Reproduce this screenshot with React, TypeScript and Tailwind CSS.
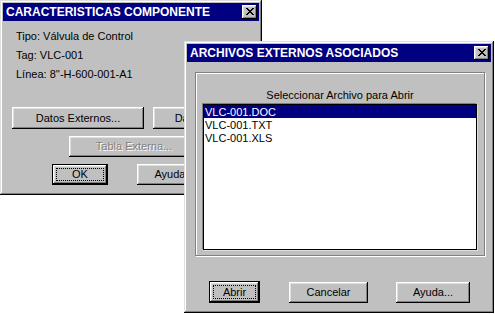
import React from 'react';

// Win95-style bevels
const WIN =
  'shadow-[inset_-1px_-1px_0_#000,inset_1px_1px_0_#dfdfdf,inset_-2px_-2px_0_#808080,inset_2px_2px_0_#fff]';
const BTN =
  'shadow-[inset_-1px_-1px_0_#000,inset_1px_1px_0_#fff,inset_-2px_-2px_0_#808080,inset_2px_2px_0_#dfdfdf]';

const CloseBtn = () => (
  <div className={`flex h-[14px] w-[15px] items-center justify-center bg-[#c0c0c0] ${BTN}`}>
    <svg width="8" height="7" viewBox="0 0 8 7" shapeRendering="crispEdges" className="mb-[1px]">
      <g fill="#000">
        <rect x="0" y="0" width="2" height="1" />
        <rect x="6" y="0" width="2" height="1" />
        <rect x="1" y="1" width="2" height="1" />
        <rect x="5" y="1" width="2" height="1" />
        <rect x="2" y="2" width="4" height="1" />
        <rect x="3" y="3" width="2" height="1" />
        <rect x="2" y="4" width="4" height="1" />
        <rect x="1" y="5" width="2" height="1" />
        <rect x="5" y="5" width="2" height="1" />
        <rect x="0" y="6" width="2" height="1" />
        <rect x="6" y="6" width="2" height="1" />
      </g>
    </svg>
  </div>
);

const TitleBar = ({ title }: { title: string }) => (
  <div className="flex h-[18px] items-center justify-between bg-[#000080] pl-[3px] pr-[2px]">
    <span className="text-[12px] font-bold leading-none text-white">{title}</span>
    <CloseBtn />
  </div>
);

const Button = ({
  label,
  className = '',
  isDefault = false,
  disabled = false,
}: {
  label: string;
  className?: string;
  isDefault?: boolean;
  disabled?: boolean;
}) => (
  <div
    className={`relative flex shrink-0 items-center justify-center bg-[#c0c0c0] text-[11px] ${BTN} ${
      isDefault ? 'border border-black' : ''
    } ${className}`}
  >
    {isDefault && <div className="absolute inset-[3px] border border-dotted border-black" />}
    <span
      className={
        disabled ? 'whitespace-nowrap text-[#808080] [text-shadow:1px_1px_0_#fff]' : 'whitespace-nowrap text-black'
      }
    >
      {label}
    </span>
  </div>
);

export default function App() {
  const files = ['VLC-001.DOC', 'VLC-001.TXT', 'VLC-001.XLS'];

  return (
    <div className="relative h-[314px] w-[495px] overflow-hidden bg-white font-['Liberation_Sans',Arial,sans-serif] text-black">
      {/* Caracteristicas componente */}
      <div className={`absolute left-0 top-0 h-[195px] w-[262px] overflow-hidden bg-[#c0c0c0] p-[3px] ${WIN}`}>
        <TitleBar title="CARACTERISTICAS COMPONENTE" />
        <div className="pl-[13px] pt-[6px] text-[11px] leading-[19px]">
          <div>Tipo: Válvula de Control</div>
          <div>Tag: VLC-001</div>
          <div>Línea: 8''-H-600-001-A1</div>
        </div>
        <div className="ml-[9px] mt-[23px] flex gap-[9px]">
          <Button label="Datos Externos..." className="h-[22px] w-[132px]" />
          <Button label="Datos Internos..." className="h-[22px] w-[124px]" />
        </div>
        <div className="ml-[66px] mt-[7px] flex">
          <Button label="Tabla Externa..." disabled className="h-[21px] w-[130px]" />
        </div>
        <div className="ml-[49px] mt-[7px] flex gap-[29px]">
          <Button label="OK" isDefault className="h-[21px] w-[56px]" />
          <Button label="Ayuda..." className="h-[21px] w-[75px]" />
        </div>
      </div>

      {/* Archivos externos asociados */}
      <div className={`absolute left-[184px] top-[41px] h-[272px] w-[310px] bg-[#c0c0c0] p-[3px] ${WIN}`}>
        <TitleBar title="ARCHIVOS EXTERNOS ASOCIADOS" />
        <div className="ml-[8px] mt-[10px] h-[184px] w-[290px] border border-[#808080] pt-[16px] shadow-[inset_1px_1px_0_#fff,1px_1px_0_#fff]">
          <div className="text-center text-[11px] leading-[13px]">Seleccionar Archivo para Abrir</div>
          <div className="ml-[7px] mt-[2px] h-[146px] w-[274px] border border-black bg-white shadow-[-1px_-1px_0_#808080,1px_1px_0_#dfdfdf]">
            {files.map((f, i) => (
              <div
                key={f}
                className={`flex h-[13px] items-center pl-[1px] text-[11px] leading-[12px] ${
                  i === 0 ? 'bg-[#000080] text-white' : 'text-black'
                }`}
              >
                {f}
              </div>
            ))}
          </div>
        </div>
        <div className="ml-[22px] mt-[25px] flex items-center">
          <Button label="Abrir" isDefault className="h-[22px] w-[51px]" />
          <Button label="Cancelar" className="ml-[29px] h-[21px] w-[79px]" />
          <Button label="Ayuda..." className="ml-[28px] h-[21px] w-[74px]" />
        </div>
      </div>
    </div>
  );
}
